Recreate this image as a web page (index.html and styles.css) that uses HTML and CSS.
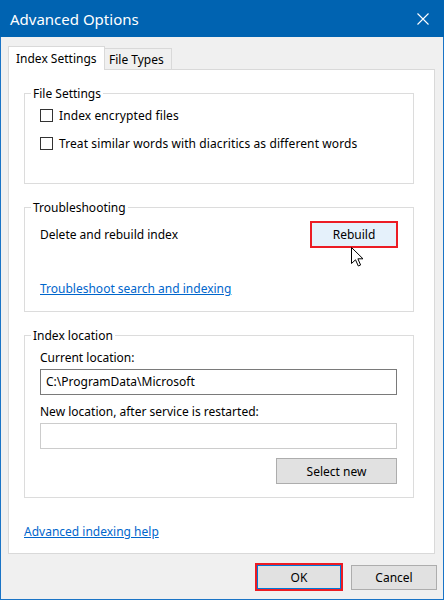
FILE: index.html
```html
<!DOCTYPE html>
<html>
<head>
<meta charset="utf-8">
<link rel="stylesheet" href="styles.css">
</head>
<body>
<div class="window">
  <div class="titlebar">
    <span class="title">Advanced Options</span>
    <svg class="close" width="12" height="12" viewBox="0 0 12 12"><path d="M0.5 0.5 L11.5 11.5 M11.5 0.5 L0.5 11.5" stroke="#fff" stroke-width="1.1" fill="none"/></svg>
  </div>
  <div class="client">
    <div class="tabs">
      <div class="tab active">Index Settings</div>
      <div class="tab">File Types</div>
    </div>
    <div class="panel">
      <fieldset class="group g1">
        <legend>File Settings</legend>
        <div class="check"><span class="box"></span><span class="ctext">Index encrypted files</span></div>
        <div class="check second"><span class="box"></span><span class="ctext">Treat similar words with diacritics as different words</span></div>
      </fieldset>
      <fieldset class="group g2">
        <legend>Troubleshooting</legend>
        <div class="row">
          <span>Delete and rebuild index</span>
          <div class="btn-wrap">
            <button class="btn rebuild">Rebuild</button>
            <svg class="cursor" width="13" height="20" viewBox="0 0 13 20"><path d="M0.5 0.5 V16.5 L4.5 12.8 L7.3 19 L9.6 18 L6.9 11.8 H12 Z" fill="#fff" stroke="#000" stroke-width="1" stroke-linejoin="miter"/></svg>
          </div>
        </div>
        <a class="link trouble">Troubleshoot search and indexing</a>
      </fieldset>
      <fieldset class="group g3">
        <legend>Index location</legend>
        <div class="label">Current location:</div>
        <div class="textbox">C:\ProgramData\Microsoft</div>
        <div class="label second">New location, after service is restarted:</div>
        <div class="textbox disabled"></div>
        <div class="btnrow"><button class="btn select">Select new</button></div>
      </fieldset>
      <a class="link help">Advanced indexing help</a>
    </div>
    <div class="footer">
      <button class="btn ok">OK</button>
      <button class="btn cancel">Cancel</button>
    </div>
  </div>
</div>
</body>
</html>
```

FILE: styles.css
```css
* { box-sizing: border-box; }
html, body { margin: 0; padding: 0; }
body {
  width: 444px;
  height: 600px;
  overflow: hidden;
  font-family: "Noto Sans", "Liberation Sans", sans-serif;
  font-size: 12px;
  line-height: 16px;
  color: #000;
}
.window {
  width: 444px;
  height: 600px;
  display: flex;
  flex-direction: column;
  background: #f0f0f0;
  border: 1px solid #1a74c6;
  border-top: none;
}
.titlebar {
  height: 37px;
  margin: 0 -1px;
  background: #0063b1;
  color: #fff;
  display: flex;
  align-items: center;
  padding: 0 15px 0 10px;
  flex: none;
}
.title {
  font-size: 15px;
  line-height: 20px;
  flex: 1;
  margin-top: 1px;
}
.close { display: block; margin-top: 1px; }
.client {
  flex: 1;
  padding: 9px 8px 0 7px;
  display: flex;
  flex-direction: column;
}
.tabs {
  display: flex;
  align-items: flex-end;
  position: relative;
  z-index: 1;
}
.tab {
  height: 21px;
  line-height: 20px;
  padding: 1px 4px 0 4px;
  background: #f0f0f0;
  border: 1px solid #d9d9d9;
  border-left: none;
  border-bottom: none;
  width: 67px;
}
.tab.active {
  height: 24px;
  width: 97px;
  margin-bottom: -1px;
  background: #fff;
  border-left: 1px solid #d9d9d9;
  padding: 2px 0 0 7px;
}
.panel {
  width: 427px;
  height: 485px;
  background: #fff;
  border: 1px solid #d9d9d9;
  padding: 16px 19px 0 15px;
  flex: none;
}
.group {
  margin: 0;
  width: 390px;
  border: 1px solid #dcdcdc;
  padding: 6px 15px 0 15px;
  min-width: 0;
}
.group legend {
  padding: 0 2px;
  margin-left: -9px;
  line-height: 15px;
}
.g1 { padding-bottom: 32px; }
.g2 { margin-top: 16px; padding-top: 6px; padding-bottom: 14px; }
.g3 { margin-top: 16px; padding-bottom: 13px; }
.check {
  display: flex;
  align-items: center;
  height: 16px;
}
.ctext { position: relative; top: 1px; letter-spacing: 0.1px; }
.check.second { margin-top: 12px; }
.box {
  width: 13px;
  height: 13px;
  border: 1px solid #333;
  background: #fff;
  margin-right: 6px;
  flex: none;
}
.row {
  display: flex;
  align-items: center;
  justify-content: space-between;
  height: 27px;
}
.btn-wrap { position: relative; }
.btn {
  font-family: inherit;
  font-size: 12px;
  color: #000;
  padding: 0;
  margin: 0;
  background: #e1e1e1;
  border: 1px solid #adadad;
  display: block;
}
.rebuild {
  width: 88px;
  height: 27px;
  background: #e5f1fb;
  border: 2px solid #ec1c24;
}
.cursor {
  position: absolute;
  left: 41px;
  top: 26px;
}
.link {
  display: block;
  color: #0066cc;
  text-decoration: underline;
  height: 16px;
}
.trouble { margin-top: 33px; }
.label { height: 16px; padding-top: 1px; }
.label.second { margin-top: 8px; }
.textbox {
  margin-top: 4px;
  width: 357px;
  height: 26px;
  border: 1px solid #7a7a7a;
  background: #fff;
  padding-left: 5px;
  line-height: 24px;
}
.textbox.disabled { border-color: #cccccc; }
.btnrow {
  display: flex;
  justify-content: flex-end;
  margin-top: 9px;
  width: 357px;
}
.select { width: 121px; height: 26px; }
.help { margin-top: 26px; margin-left: 0; }
.footer {
  display: flex;
  justify-content: flex-end;
  align-items: center;
  gap: 8px;
  padding: 9px 0 0 0;
  margin-right: -2px;
}
.ok {
  width: 88px;
  height: 28px;
  border: 2px solid #ec1c24;
  box-shadow: inset 0 0 0 1px #0078d7;
}
.cancel { width: 86px; height: 25px; }
```
